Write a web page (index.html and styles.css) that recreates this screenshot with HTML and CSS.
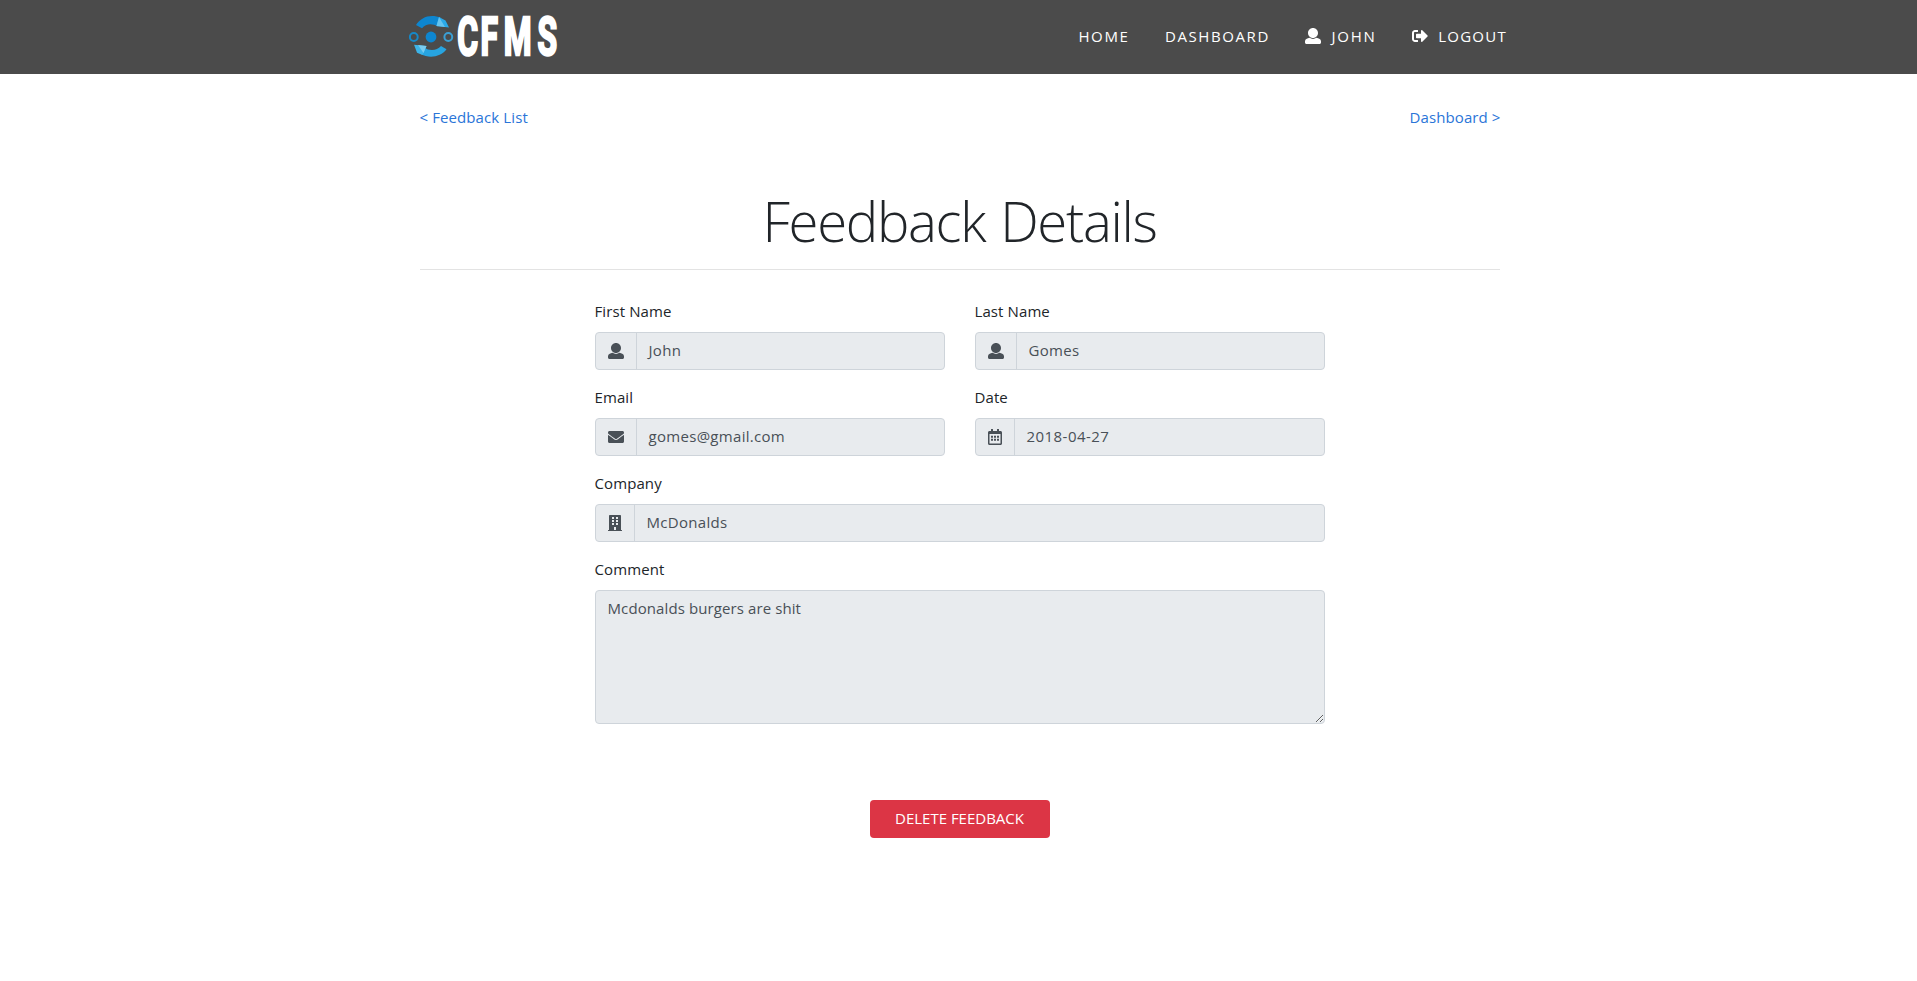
FILE: index.html
```html
<!DOCTYPE html>
<html lang="en">
<head>
<meta charset="utf-8">
<title>Feedback Details</title>
<link rel="stylesheet" href="styles.css">
</head>
<body>
<svg class="defs" width="0" height="0">
  <symbol id="user" viewBox="0 0 512 512"><path d="M256 0c88.366 0 160 71.634 160 160s-71.634 160-160 160S96 248.366 96 160 167.634 0 256 0zm183.283 333.821l-71.313-17.828c-74.923 53.89-165.738 41.864-223.94 0l-71.313 17.828C29.981 344.505 0 382.903 0 426.955V464c0 26.510 21.490 48 48 48h416c26.510 0 48-21.490 48-48v-37.045c0-44.052-29.981-82.450-72.717-93.134z"/></symbol>
  <symbol id="sign-out" viewBox="0 0 512 512"><path d="M497 273L329 441c-15 15-41 4.500-41-17v-96H152c-13.300 0-24-10.700-24-24v-96c0-13.300 10.700-24 24-24h136V88c0-21.400 25.900-32 41-17l168 168c9.300 9.400 9.300 24.600 0 34zM192 436v-40c0-6.600-5.400-12-12-12H96c-17.700 0-32-14.300-32-32V160c0-17.700 14.300-32 32-32h84c6.600 0 12-5.400 12-12V76c0-6.600-5.400-12-12-12H96c-53 0-96 43-96 96v192c0 53 43 96 96 96h84c6.600 0 12-5.400 12-12z"/></symbol>
  <symbol id="envelope" viewBox="0 0 512 512"><path d="M502.300 190.800c3.900-3.100 9.700-.2 9.700 4.700V400c0 26.500-21.500 48-48 48H48c-26.500 0-48-21.500-48-48V195.600c0-5 5.700-7.800 9.700-4.700 22.400 17.400 52.100 39.500 154.100 113.600 21.100 15.400 56.700 47.800 92.200 47.600 35.700.3 72-32.800 92.300-47.600 102-74.100 131.600-96.300 154-113.700zM256 320c23.200.4 56.600-29.200 73.400-41.400 132.700-96.300 142.800-104.700 173.400-128.700 5.800-4.500 9.200-11.500 9.200-18.900v-19c0-26.500-21.500-48-48-48H48c-26.500 0-48 21.500-48 48v19c0 7.400 3.400 14.300 9.200 18.900 30.600 23.900 40.700 32.400 173.400 128.700 16.800 12.200 50.200 41.800 73.400 41.400z"/></symbol>
  <symbol id="calendar" viewBox="0 0 448 512"><path fill-rule="evenodd" d="M400 64h-48V12c0-6.600-5.400-12-12-12h-40c-6.600 0-12 5.400-12 12v52H160V12c0-6.600-5.400-12-12-12h-40c-6.600 0-12 5.400-12 12v52H48C21.500 64 0 85.500 0 112v352c0 26.500 21.500 48 48 48h352c26.500 0 48-21.500 48-48V112c0-26.500-21.500-48-48-48zM48 160h352v298c0 3.300-2.700 6-6 6H54c-3.300 0-6-2.700-6-6zM96 212h64v64H96zM192 212h64v64h-64zM288 212h64v64h-64zM96 308h64v64H96zM192 308h64v64h-64zM288 308h64v64h-64z"/></symbol>
  <symbol id="building" viewBox="0 0 448 512"><path fill-rule="evenodd" d="M436 480h-20V24c0-13.255-10.745-24-24-24H56C42.745 0 32 10.745 32 24v456H12c-6.627 0-12 5.373-12 12v20h448v-20c0-6.627-5.373-12-12-12zM128 64h64v64h-64zM256 64h64v64h-64zM128 160h64v64h-64zM256 160h64v64h-64zM128 256h64v64h-64zM256 256h64v64h-64zM192 384h64v96h-64z"/></symbol>
</svg>
<header class="navbar">
  <div class="navbar-inner">
    <svg class="logo" width="152" height="50" viewBox="0 0 152 50">
      <path d="M7 13C12 5 22 1.500 32 6L29 14.500C23 11 17 11.500 13 16.300Z" fill="#0d86d0"/>
      <path d="M30 5L36.500 8.500L40 15.500L27.500 14Z" fill="#2aa9e8"/>
      <path d="M30 5L36 14.900L27.500 14Z" fill="#65c3ee"/>
      <path d="M37.500 37.300C32 45 20 47 12 42L15 35.500C21 39.500 28 38.500 32 34Z" fill="#27a4e0"/>
      <path d="M5 32.700L17.500 34L13.500 43L8 40.700Z" fill="#3cb4e9"/>
      <path d="M9 33.100L17.500 34L14.500 41Z" fill="#79cbf0"/>
      <circle cx="22" cy="25" r="5.400" fill="#0d86d0"/>
      <circle cx="4.800" cy="25" r="3.900" fill="none" stroke="#1688c8" stroke-width="2"/>
      <circle cx="39.300" cy="25" r="3.900" fill="none" stroke="#3a9fd4" stroke-width="2"/>
      <g transform="translate(49.500 43.300) scale(.6 1)"><text class="logo-text" x="-2 36.500 75.500 131.500" y="0">CFMS</text></g>
    </svg>
    <nav class="menu">
      <a class="menu-link">HOME</a>
      <a class="menu-link">DASHBOARD</a>
      <a class="menu-link john"><svg class="icon"><use href="#user"/></svg>JOHN</a>
      <a class="menu-link logout"><svg class="icon"><use href="#sign-out"/></svg>LOGOUT</a>
    </nav>
  </div>
</header>
<main class="content">
  <div class="links"><a>&lt; Feedback List</a><a>Dashboard &gt;</a></div>
  <h1 class="title">Feedback Details</h1>
  <form class="form">
    <div class="field"><label>First Name</label><div class="group"><span class="addon"><svg class="icon"><use href="#user"/></svg></span><span class="value">John</span></div></div>
    <div class="field"><label>Last Name</label><div class="group"><span class="addon"><svg class="icon"><use href="#user"/></svg></span><span class="value">Gomes</span></div></div>
    <div class="field"><label>Email</label><div class="group"><span class="addon"><svg class="icon"><use href="#envelope"/></svg></span><span class="value">gomes@gmail.com</span></div></div>
    <div class="field"><label>Date</label><div class="group"><span class="addon"><svg class="icon narrow"><use href="#calendar"/></svg></span><span class="value date">2018-04-27</span></div></div>
    <div class="field wide"><label>Company</label><div class="group"><span class="addon"><svg class="icon narrow"><use href="#building"/></svg></span><span class="value">McDonalds</span></div></div>
    <div class="field wide"><label>Comment</label><textarea class="comment" readonly>Mcdonalds burgers are shit</textarea></div>
  </form>
  <button class="delete">DELETE FEEDBACK</button>
</main>
</body>
</html>
```
FILE: styles.css
```css
* { box-sizing: border-box; }
body { margin: 0; background: #fff; color: #212529; font: 15px/24px "Open Sans", "Noto Sans", sans-serif; letter-spacing: .1px; }
.defs { display: block; height: 0; }
.navbar { height: 74px; background: #4b4b4b; }
.navbar-inner { width: 1100px; margin: 0 auto; display: flex; justify-content: space-between; padding-top: 12px; }
.logo { display: block; overflow: visible; }
.logo-text { font: 700 53px/1 Roboto, sans-serif; fill: #fff; stroke: #fff; stroke-width: 2.600px; }
.menu { display: flex; gap: 35.500px; color: #fff; padding: 12px 1.500px 0 0; letter-spacing: 1.600px; }
.menu-link { display: flex; align-items: center; height: 24px; white-space: nowrap; }
.john { letter-spacing: 1.800px; }
.logout { letter-spacing: 1.250px; }
.icon { width: 16px; height: 16px; fill: currentColor; flex: none; }
.icon.narrow { width: 14px; }
.menu .icon { margin-right: 10px; }
.content { width: 1082px; margin: 0 auto; padding: 30px 0 0 2px; display: flex; flex-direction: column; }
.links { display: flex; justify-content: space-between; color: #2a75d8; padding-top: 1px; margin-right: -1px; }
.title { margin: 59px 0 30px; height: 82px; border-bottom: 1px solid #e3e3e3; text-align: center; font-weight: 300; font-size: 54.500px; line-height: 67px; letter-spacing: -1.300px; word-spacing: 2px; }
.form { width: 730px; margin: 0 auto; display: grid; grid-template-columns: 350px 350px; gap: 16px 30px; }
.field { display: flex; flex-direction: column; }
.field label { height: 32px; line-height: 22px; }
.wide { grid-column: span 2; }
.group { display: flex; height: 38px; border: 1px solid #ced4da; border-radius: 4px; background: #e8ebee; color: #495057; }
.addon { display: flex; align-items: center; padding: 0 12px 1px; border-right: 1px solid #ced4da; }
.value { padding: 5px 12px 6px; letter-spacing: .3px; }
.date { letter-spacing: .45px; }
.comment { display: block; width: 100%; height: 134px; padding: 5px 12px 6px; border: 1px solid #ced4da; border-radius: 4px; background: #e8ebee; color: #495057; font: inherit; letter-spacing: inherit; resize: vertical; outline: 0; }
.delete { width: 180px; height: 38px; margin: 76px auto 0; padding: 0 0 2px; border: 0; border-radius: 4px; background: #dc3545; color: #fff; font: inherit; letter-spacing: 0; }
```
